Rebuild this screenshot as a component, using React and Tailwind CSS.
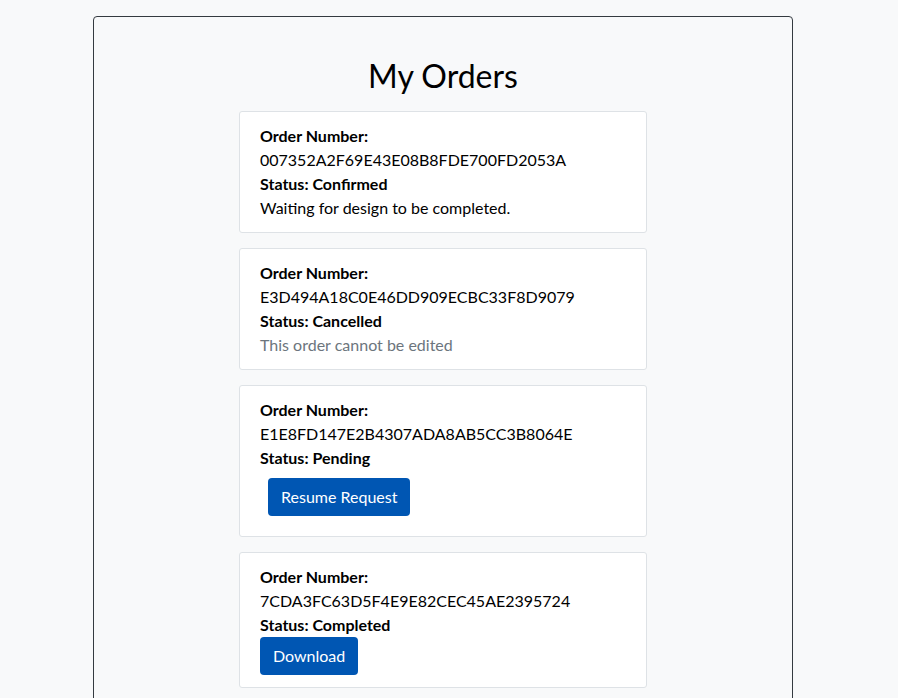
export default function App() {
  const orders = [
    { id: "007352A2F69E43E08B8FDE700FD2053A", status: "Confirmed", kind: "text", note: "Waiting for design to be completed." },
    { id: "E3D494A18C0E46DD909ECBC33F8D9079", status: "Cancelled", kind: "muted", note: "This order cannot be edited" },
    { id: "E1E8FD147E2B4307ADA8AB5CC3B8064E", status: "Pending", kind: "resume" },
    { id: "7CDA3FC63D5F4E9E82CEC45AE2395724", status: "Completed", kind: "download" },
  ];
  return (
    <div className="min-h-[698px] bg-[#f8f9fa] pt-4 text-black" style={{ fontFamily: "Lato, 'Noto Sans', sans-serif" }}>
      <div className="ml-[93px] w-[700px] min-h-[700px] rounded border border-[#343a40] pt-[40px]">
        <h1 className="text-center text-[32px] leading-[38px] font-normal mb-[16px]">My Orders</h1>
        <div className="flex flex-col items-center gap-[15px]">
          {orders.map((o) => (
            <div key={o.id} className="w-[408px] bg-white border border-[#dee2e6] rounded-[3px] px-5 py-3 text-base leading-6">
              <div className="font-bold">Order Number:</div>
              <div>{o.id}</div>
              <div className="font-bold">Status: {o.status}</div>
              {o.kind === "text" && <div>{o.note}</div>}
              {o.kind === "muted" && <div className="text-[#6c757d]">{o.note}</div>}
              {o.kind === "resume" && (
                <button className="m-2 rounded bg-[#0056b3] text-white px-[13px] py-[7px] leading-6">Resume Request</button>
              )}
              {o.kind === "download" && (
                <button className="rounded bg-[#0056b3] text-white px-[13px] py-[7px] leading-6">Download</button>
              )}
            </div>
          ))}
        </div>
      </div>
    </div>
  );
}
